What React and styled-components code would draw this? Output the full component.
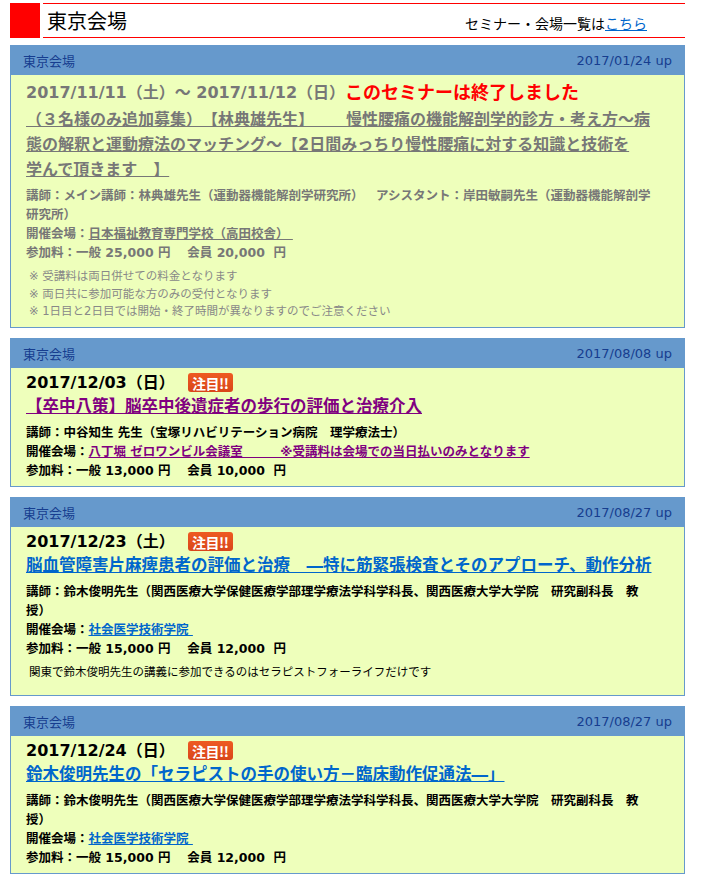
import React from "react";
import styled, { createGlobalStyle } from "styled-components";

const GlobalStyle = createGlobalStyle`
  html, body { margin: 0; padding: 0; background: #ffffff; }
  body {
    font-family: "DejaVu Sans", "Noto Sans CJK JP", sans-serif;
    color: #000;
    text-spacing-trim: space-all;
    text-autospace: no-autospace;
  }
  * { box-sizing: border-box; }
`;

const Page = styled.div`
  width: 685px;
  padding: 3px 0 0 10px;
`;

const TopHeader = styled.header`
  display: flex;
  gap: 3px;
  height: 35px;
  margin-bottom: 7px;
`;

const RedMark = styled.div`
  width: 30px;
  flex: none;
  background: #ff0000;
`;

const HeaderBar = styled.div`
  flex: 1;
  display: flex;
  align-items: center;
  justify-content: space-between;
  border-top: 1px solid #ff0000;
  border-bottom: 1px solid #ff0000;
  padding: 0 38px 0 4px;
`;

const PageTitle = styled.h1`
  margin: 0;
  font-family: "Noto Sans CJK JP", sans-serif;
  font-weight: normal;
  font-size: 20px;
  line-height: 1;
`;

const HeaderNav = styled.div`
  font-family: "Noto Sans CJK JP", sans-serif;
  font-size: 14px;
  padding-top: 4px;
`;

const NavLink = styled.a`
  color: #0066cc;
  text-decoration: underline;
`;

const Card = styled.section`
  border: 1px solid #6699cc;
  background: #eeffbb;
  margin-bottom: 10px;
`;

const CardHead = styled.div`
  display: flex;
  align-items: center;
  justify-content: space-between;
  height: 29px;
  padding: 0 12px;
  background: #6699cc;
  color: #163d8f;
  font-size: 13px;
`;

const HeadVenue = styled.span`
  font-family: "Noto Sans CJK JP", sans-serif;
`;

const HeadDate = styled.span`
  font-family: "DejaVu Sans", sans-serif;
`;

const CardBody = styled.div`
  padding: 4px 21px 6px 15px;
  color: ${(p) => (p.$ended ? "#777777" : "#000000")};
`;

const DateLine = styled.div`
  display: flex;
  align-items: center;
  min-height: 22px;
  line-height: 22px;
`;

const DateText = styled.span`
  font-size: 16px;
  font-weight: bold;
`;

const EndedText = styled.span`
  margin-left: 0;
  font-size: 18px;
  line-height: 28px;
  font-weight: bold;
  color: #ff0000;
`;

const Badge = styled.span`
  margin-left: 13px;
  display: inline-flex;
  align-items: center;
  justify-content: center;
  width: 45px;
  height: 19px;
  border-radius: 3px;
  background: linear-gradient(#ee5a22, #d9461a);
  color: #ffffff;
  font-family: "Noto Sans CJK JP", sans-serif;
  font-weight: bold;
  font-size: 14px;
  letter-spacing: -0.5px;
  line-height: 1;
`;

const Title = styled.div`
  font-size: ${(p) => (p.$ended ? "16px" : "16.5px")};
  line-height: 25px;
  font-weight: bold;
`;

const TitleLink = styled.a`
  color: ${(p) => p.$color};
  text-decoration: underline;
`;

const Keep = styled.span`
  white-space: nowrap;
`;

const InfoList = styled.div`
  margin-top: 4px;
  font-size: 12.5px;
  line-height: 19px;
  font-weight: bold;
`;

const InfoLine = styled.div``;

const InfoLink = styled.a`
  color: ${(p) => p.$color};
  text-decoration: underline;
`;

const NoteList = styled.div`
  margin-top: ${(p) => (p.$single ? "5px" : "6px")};
  margin-bottom: ${(p) => (p.$single ? "8px" : "0")};
  padding-left: 3px;
  font-size: 11.5px;
  line-height: ${(p) => (p.$single ? "18px" : "17.5px")};
  color: ${(p) => (p.$ended ? "#888888" : "#000000")};
`;

const Note = styled.div``;

const seminars = [
  {
    up: "2017/01/24 up",
    ended: true,
    date: "2017/11/11（土）～ 2017/11/12（日）",
    title: (
      <>
        （３名様のみ追加募集）【林典雄先生】　　慢性腰痛の機能解剖学的診方・考え方～病態の解釈と運動療法のマッチング～【2日間みっちり慢性腰痛に対する知識と技術を
        <Keep>学んで頂きます　】</Keep>
      </>
    ),
    lecturer: (
      <>
        講師：メイン講師：林典雄先生（運動器機能解剖学研究所）　アシスタント：岸田敏嗣先生（運動器機能解剖学
        <Keep>研究所）</Keep>
      </>
    ),
    venue: "日本福祉教育専門学校（高田校舎）\u00a0",
    fee: "参加料：一般 25,000 円　 会員 20,000\u00a0 円",
    notes: [
      "※ 受講料は両日併せての料金となります",
      "※ 両日共に参加可能な方のみの受付となります",
      "※ 1日目と2日目では開始・終了時間が異なりますのでご注意ください",
    ],
  },
  {
    up: "2017/08/08 up",
    date: "2017/12/03（日）",
    title: "【卒中八策】脳卒中後遺症者の歩行の評価と治療介入",
    linkColor: "#800080",
    lecturer: "講師：中谷知生 先生（宝塚リハビリテーション病院　理学療法士）",
    venue: "八丁堀 ゼロワンビル会議室　　　※受講料は会場での当日払いのみとなります",
    fee: "参加料：一般 13,000 円　 会員 10,000\u00a0 円",
    notes: [],
  },
  {
    up: "2017/08/27 up",
    date: "2017/12/23（土）",
    title: "脳血管障害片麻痺患者の評価と治療　―特に筋緊張検査とそのアプローチ、動作分析",
    linkColor: "#0066cc",
    lecturer: (
      <>
        講師：鈴木俊明先生（関西医療大学保健医療学部理学療法学科学科長、関西医療大学大学院　研究副科長　教<Keep>授）</Keep>
      </>
    ),
    venue: "社会医学技術学院\u00a0",
    fee: "参加料：一般 15,000 円　 会員 12,000\u00a0 円",
    notes: ["関東で鈴木俊明先生の講義に参加できるのはセラピストフォーライフだけです"],
  },
  {
    up: "2017/08/27 up",
    date: "2017/12/24（日）",
    title: "鈴木俊明先生の「セラピストの手の使い方－臨床動作促通法―」",
    linkColor: "#0066cc",
    lecturer: (
      <>
        講師：鈴木俊明先生（関西医療大学保健医療学部理学療法学科学科長、関西医療大学大学院　研究副科長　教<Keep>授）</Keep>
      </>
    ),
    venue: "社会医学技術学院\u00a0",
    fee: "参加料：一般 15,000 円　 会員 12,000\u00a0 円",
    notes: [],
  },
];

function SeminarCard({ s }) {
  const linkColor = s.ended ? "#777777" : s.linkColor;
  return (
    <Card>
      <CardHead>
        <HeadVenue>東京会場</HeadVenue>
        <HeadDate>{s.up}</HeadDate>
      </CardHead>
      <CardBody $ended={s.ended}>
        <DateLine>
          <DateText>{s.date}</DateText>
          {s.ended ? <EndedText>このセミナーは終了しました</EndedText> : <Badge>注目!!</Badge>}
        </DateLine>
        <Title $ended={s.ended}>
          <TitleLink href="#" $color={linkColor}>
            {s.title}
          </TitleLink>
        </Title>
        <InfoList>
          <InfoLine>{s.lecturer}</InfoLine>
          <InfoLine>
            開催会場：<InfoLink href="#" $color={linkColor}>{s.venue}</InfoLink>
          </InfoLine>
          <InfoLine>{s.fee}</InfoLine>
        </InfoList>
        {s.notes.length > 0 && (
          <NoteList $ended={s.ended} $single={s.notes.length === 1}>
            {s.notes.map((n) => (
              <Note key={n}>{n}</Note>
            ))}
          </NoteList>
        )}
      </CardBody>
    </Card>
  );
}

export default function App() {
  return (
    <>
      <GlobalStyle />
      <Page>
        <TopHeader>
          <RedMark />
          <HeaderBar>
            <PageTitle>東京会場</PageTitle>
            <HeaderNav>
              セミナー・会場一覧は<NavLink href="#">こちら</NavLink>
            </HeaderNav>
          </HeaderBar>
        </TopHeader>
        {seminars.map((s, i) => (
          <SeminarCard key={i} s={s} />
        ))}
      </Page>
    </>
  );
}
